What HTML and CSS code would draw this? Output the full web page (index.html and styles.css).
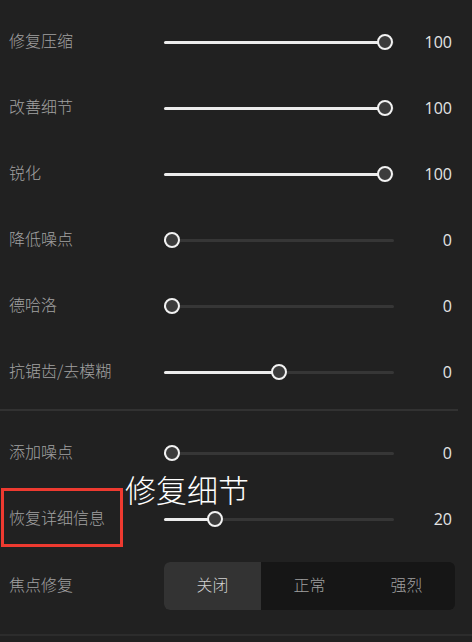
FILE: index.html
```html
<!DOCTYPE html>
<html lang="zh-CN">
  <head>
    <meta charset="UTF-8" />
    <meta name="viewport" content="width=device-width, initial-scale=1.0" />
    <title>增强设置</title>
    <link rel="stylesheet" href="styles.css">
  </head>
  <body>
    <div class="panel">
      <div class="row">
        <span class="label">修复压缩</span>
        <div class="slider"><div class="fill" style="width: 221px"></div><div class="thumb" style="left: 221px"></div></div>
        <span class="value">100</span>
      </div>
      <div class="row">
        <span class="label">改善细节</span>
        <div class="slider"><div class="fill" style="width: 221px"></div><div class="thumb" style="left: 221px"></div></div>
        <span class="value">100</span>
      </div>
      <div class="row">
        <span class="label">锐化</span>
        <div class="slider"><div class="fill" style="width: 221px"></div><div class="thumb" style="left: 221px"></div></div>
        <span class="value">100</span>
      </div>
      <div class="row">
        <span class="label">降低噪点</span>
        <div class="slider"><div class="fill" style="width: 8px"></div><div class="thumb" style="left: 8px"></div></div>
        <span class="value">0</span>
      </div>
      <div class="row">
        <span class="label">德哈洛</span>
        <div class="slider"><div class="fill" style="width: 8px"></div><div class="thumb" style="left: 8px"></div></div>
        <span class="value">0</span>
      </div>
      <div class="row">
        <span class="label">抗锯齿/去模糊</span>
        <div class="slider"><div class="fill" style="width: 115px"></div><div class="thumb" style="left: 115px"></div></div>
        <span class="value">0</span>
      </div>

      <div class="divider"></div>

      <div class="row">
        <span class="label">添加噪点</span>
        <div class="slider"><div class="fill" style="width: 8px"></div><div class="thumb" style="left: 8px"></div></div>
        <span class="value">0</span>
      </div>
      <div class="row">
        <span class="label">恢复详细信息</span>
        <div class="slider"><div class="fill" style="width: 51px"></div><div class="thumb" style="left: 51px"></div></div>
        <span class="value">20</span>
      </div>

      <div class="row seg-row">
        <span class="label">焦点修复</span>
        <div class="segmented">
          <span class="seg active">关闭</span>
          <span class="seg">正常</span>
          <span class="seg">强烈</span>
        </div>
      </div>

      <div class="bottom-line"></div>

      <div class="highlight"></div>
      <div class="callout">修复细节</div>
    </div>
  </body>
</html>
```

FILE: styles.css
```css
body {
  margin: 0;
  background: #212121;
  font-family: "Noto Sans", "Noto Sans CJK SC", sans-serif;
  overflow: hidden;
}
.panel {
  position: relative;
  padding-top: 9px;
  width: 472px;
  height: 642px;
  box-sizing: border-box;
}
.row {
  display: flex;
  align-items: center;
  height: 66px;
  padding-left: 9px;
}
.label {
  width: 155px;
  padding-bottom: 5px;
  font-size: 16px;
  color: #a2a2a2;
  font-family: "Noto Sans CJK SC", sans-serif;
  font-weight: 300;
}
.slider {
  position: relative;
  width: 230px;
  height: 3px;
  background: #363636;
  border-radius: 2px;
}
.fill {
  height: 3px;
  background: #ececec;
  border-radius: 2px;
}
.thumb {
  position: absolute;
  top: 50%;
  width: 12px;
  height: 12px;
  margin-left: -8.5px;
  margin-top: -8.5px;
  border: 2.5px solid #f2f2f2;
  border-radius: 50%;
  background: #3c3c3c;
}
.value {
  width: 58px;
  padding-bottom: 1px;
  text-align: right;
  font-size: 16px;
  color: #e4e4e4;
  font-family: "Open Sans", sans-serif;
}
.divider {
  margin: 4px 0 9px;
  width: 458px;
  height: 2px;
  background: #323232;
}
.seg-row {
  height: 48px;
  margin-top: 10px;
}
.segmented {
  display: flex;
  width: 291px;
  height: 48px;
  background: #161616;
  border-radius: 6px;
  overflow: hidden;
}
.seg {
  flex: 1;
  display: flex;
  align-items: center;
  justify-content: center;
  padding-bottom: 5px;
  font-size: 16px;
  color: #a0a0a0;
  font-family: "Noto Sans CJK SC", sans-serif;
  font-weight: 300;
}
.seg.active {
  background: #333333;
  color: #d2d2d2;
}
.bottom-line {
  margin-top: 24px;
  height: 2px;
  background: #2c2c2c;
}
.highlight {
  position: absolute;
  left: 1px;
  top: 488px;
  width: 116px;
  height: 53px;
  border: 3px solid #ee3a30;
}
.callout {
  position: absolute;
  left: 125px;
  top: 470px;
  font-size: 31px;
  line-height: 38px;
  color: #ffffff;
  font-family: "Noto Sans CJK SC", sans-serif;
  font-weight: 300;
}
```
